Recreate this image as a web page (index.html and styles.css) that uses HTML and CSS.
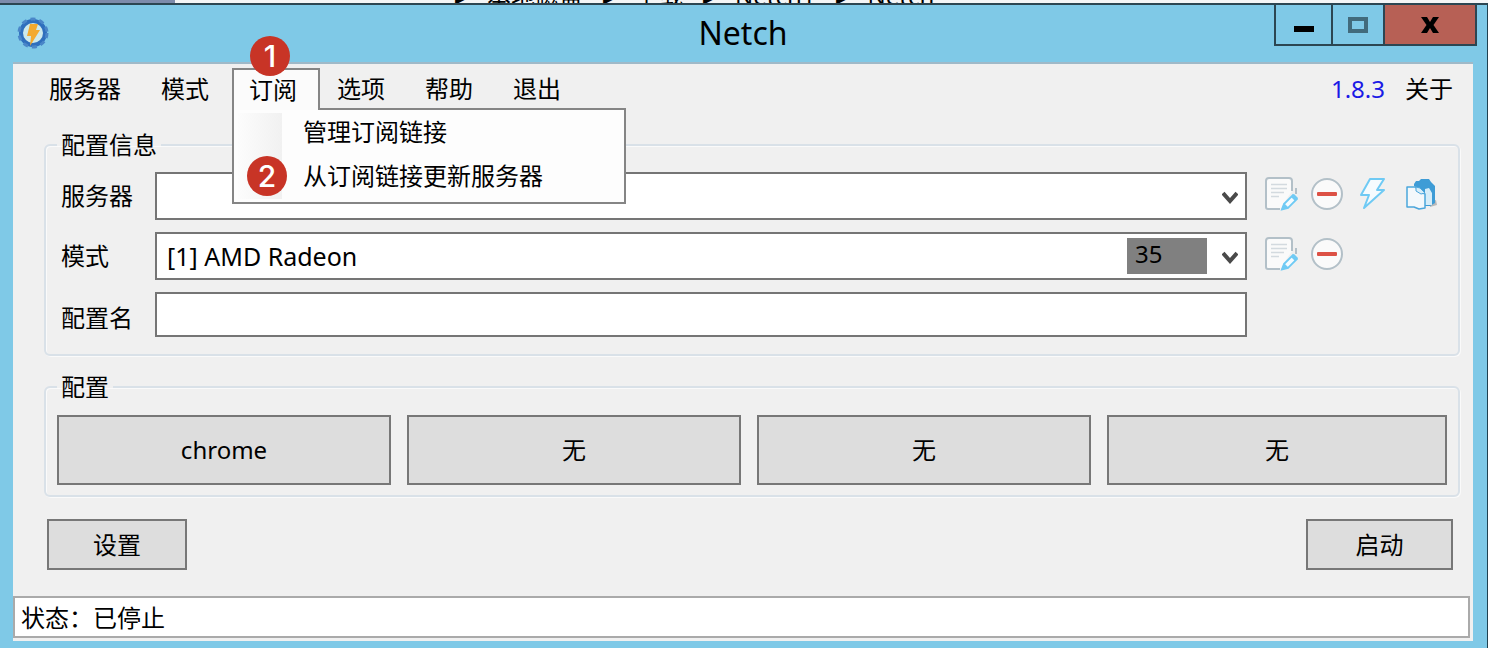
FILE: index.html
```html
<!DOCTYPE html>
<html lang="zh-CN">
<head>
<meta charset="utf-8">
<title>Netch</title>
<link rel="stylesheet" href="styles.css">
</head>
<body>
<svg class="sprite" aria-hidden="true">
  <symbol id="edit" viewBox="0 0 34 36">
    <path d="M28 15V5a3 3 0 0 0-3-3H5a3 3 0 0 0-3 3v26a2 2 0 0 0 2 2h12z" fill="#fafafa"/>
    <path d="M28 15V5a3 3 0 0 0-3-3H5a3 3 0 0 0-3 3v26a2 2 0 0 0 2 2h12M32 12v6" fill="none" stroke="#b3c0c8" stroke-width="2"/>
    <path d="M7 8.500h16M7 12.500h16M7 16.500h13M7 20.500h8" stroke="#d3dadf" stroke-width="1.500"/>
    <path d="M20 28L29 19l4 4-9 9-6 1.500z" fill="#f4fbff" stroke="#6fcaf4" stroke-width="1.800"/>
    <path d="M27 21l3-3 4 4-3 3zM17 34l3-7 5 5z" fill="#6fcaf4"/>
  </symbol>
  <symbol id="remove" viewBox="0 0 34 34">
    <circle cx="17" cy="17" r="15" fill="#fafafa" stroke="#b3c0c8" stroke-width="2"/>
    <rect x="7" y="15" width="20" height="4" rx="1" fill="#dc5145"/>
  </symbol>
</svg>
<div class="backdrop"><span class="tabs"></span><div class="crumbs"><span>▸</span><span>本地磁盘</span><span>▸</span><span>下载</span><span>▸</span><span>Netch1</span><span>▸</span><span>Netch</span></div></div>
<div class="window">
  <header class="titlebar">
    <svg class="logo" viewBox="0 0 32 32" aria-hidden="true">
      <circle cx="16" cy="16" r="12" fill="#cde9ec" stroke="#2f6fbd" stroke-width="4"/>
      <circle cx="16" cy="16" r="14" fill="none" stroke="#4a86c8" stroke-width="3" stroke-dasharray="5 4"/>
      <path d="M13 7h8l-2 6h4L13 29l1-10h-4z" fill="#f3a92e"/>
    </svg>
    <h1 class="title">Netch</h1>
    <div class="controls">
      <button class="control minimize" aria-label="最小化"><svg viewBox="0 0 20 16"><path d="M0 9h20v6H0z"/></svg></button>
      <button class="control maximize" aria-label="最大化"><svg viewBox="0 0 20 16"><path d="M2 2h16v12H2z" fill="none" stroke="#426b7c" stroke-width="4"/></svg></button>
      <button class="control close" aria-label="关闭"><svg viewBox="0 0 20 16"><path d="M1 0h6l3 5 3-5h6l-5.500 8 5.500 8h-6l-3-5-3 5H1l5.500-8z"/></svg></button>
    </div>
  </header>
  <main class="client">
    <nav class="menu">
      <button class="item">服务器</button>
      <button class="item">模式</button>
      <div class="open">
        <button class="item active" aria-expanded="true">订阅</button>
        <span class="badge first">1</span>
        <div class="dropdown">
          <button class="option">管理订阅链接</button>
          <button class="option">从订阅链接更新服务器</button>
          <span class="badge second">2</span>
        </div>
      </div>
      <button class="item">选项</button>
      <button class="item">帮助</button>
      <button class="item">退出</button>
      <a class="version" href="#">1.8.3</a>
      <button class="item about">关于</button>
    </nav>
    <fieldset class="group info">
      <legend>配置信息</legend>
      <label for="server">服务器</label>
      <div class="field"><select id="server"><option></option></select><svg class="arrow" viewBox="0 0 16 14"><path d="M1 2l7 8 7-8" /></svg></div>
      <div class="tools">
        <button aria-label="编辑服务器"><svg class="edit"><use href="#edit"/></svg></button>
        <button aria-label="删除服务器"><svg class="remove"><use href="#remove"/></svg></button>
        <button aria-label="测速"><svg class="bolt" viewBox="0 0 28 34"><path d="M11 2h14l-7 11h7L5 31l5-13H2z" fill="#f5fbfe" stroke="#6fcaf4" stroke-width="2" stroke-linejoin="round"/></svg></button>
        <button aria-label="复制"><svg class="copy" viewBox="0 0 32 32">
          <path d="M25 24l6-2 1 5-7 2z" fill="#b9b9b9"/>
          <path d="M9 6l2-3h3l2-2h8l2 3 4 4v17l-5 3h-7V13L9 8z" fill="#3e9cd6"/>
          <path d="M20 11l4-1 3 5v12h-7z" fill="#d6edf9"/>
          <path d="M2 9h9l1 3 8 4v14l-6 1-5-2H2z" fill="#f3f8fb" stroke="#4ba6dc" stroke-width="1.500" stroke-linejoin="round"/>
          <path d="M11 9l4 1 5 5-4 1-5-3z" fill="#d6edf9" stroke="#4ba6dc"/>
        </svg></button>
      </div>
      <label for="mode">模式</label>
      <div class="field"><select id="mode"><option>[1] AMD Radeon</option></select><span class="count">35</span><svg class="arrow" viewBox="0 0 16 14"><path d="M1 2l7 8 7-8" /></svg></div>
      <div class="tools">
        <button aria-label="编辑模式"><svg class="edit"><use href="#edit"/></svg></button>
        <button aria-label="删除模式"><svg class="remove"><use href="#remove"/></svg></button>
      </div>
      <label class="low" for="name">配置名</label>
      <div class="field short"><input id="name" type="text"></div>
    </fieldset>
    <fieldset class="group profiles">
      <legend>配置</legend>
      <button class="push">chrome</button>
      <button class="push">无</button>
      <button class="push">无</button>
      <button class="push">无</button>
    </fieldset>
    <div class="actions">
      <button class="push">设置</button>
      <button class="push">启动</button>
    </div>
    <footer class="status">状态：已停止</footer>
  </main>
</div>
</body>
</html>
```
FILE: styles.css
```css
* { box-sizing: border-box; }
body {
  margin: 0;
  min-height: 100vh;
  display: flex;
  flex-direction: column;
  font: 24px/32px "Noto Sans", "Noto Sans CJK SC", sans-serif;
  color: #000;
  background: #7fc9e7;
}
button, select, input { font: inherit; color: inherit; }
button { padding: 0; border: 0; background: none; }
svg { display: block; }
.sprite { position: absolute; width: 0; height: 0; }

.backdrop { height: 3px; display: flex; align-items: flex-end; overflow: hidden; background: #f4f5f6; }
.tabs { flex: none; width: 175px; height: 3px; margin-right: 280px; background: #7d8bab; }
.crumbs { display: flex; gap: 20px; margin-bottom: -9px; }

.window {
  flex: 1;
  display: flex;
  flex-direction: column;
  padding: 0 14px 7px 13px;
  border-top: 2px solid #2c4652;
  border-right: 1px solid #20414f;
}
.titlebar { height: 57px; display: grid; grid-template-columns: 202px 1fr 202px; align-items: start; }
.logo { width: 32px; height: 32px; margin: 12px 0 0 4px; }
.title { margin: 8px 0 0; text-align: center; font-size: 32px; line-height: 40px; font-weight: 400; }
.controls { justify-self: end; display: flex; height: 41px; margin-right: -4px; border: solid #2c4652; border-width: 0 2px 2px; }
.control { width: 55px; display: flex; justify-content: center; align-items: center; }
.control svg { width: 20px; height: 16px; }
.maximize { width: 52px; border-left: 2px solid #2c4652; }
.close { width: 92px; border-left: 2px solid #2c4652; background: #b76055; }

.client { flex: 1; display: flex; flex-direction: column; background: #f0f0f0; border-top: 2px solid #9fb9c8; }

.menu { display: flex; height: 46px; padding: 4px 3px 0 20px; }
.item { height: 42px; padding: 0 16px; }
.menu > .item { min-width: 88px; }
.menu > .item:first-child { margin-right: 4px; }
.menu > .open + .item { margin-left: -3px; }
.open { position: relative; margin-left: 3px; }
.active { width: 88px; background: #fbfbfb; border: 2px solid #858585; border-bottom: 0; padding: 0 0 0 15px; text-align: left; }
.dropdown {
  position: absolute;
  z-index: 1;
  top: 40px;
  left: 0;
  width: 394px;
  height: 96px;
  display: flex;
  flex-direction: column;
  background: linear-gradient(90deg, #fcfcfc, #f1f1f1) 4px 3px / 44px 86px no-repeat #fdfdfd;
  border: 2px solid #858585;
}
.dropdown::before { content: ""; position: absolute; top: -2px; left: 0; width: 84px; height: 2px; background: #fbfbfb; }
.option { height: 44px; padding-left: 69px; text-align: left; }
.badge {
  position: absolute;
  width: 40px;
  height: 40px;
  border-radius: 50%;
  background: #c83426;
  color: #fff;
  font: 500 30px/40px Inter, sans-serif;
  text-align: center;
}
.first { top: -32px; left: 18px; }
.second { top: 46px; left: 13px; }
.version { margin-left: auto; line-height: 42px; color: #1a1ae6; text-decoration: none; }
.menu > .about { min-width: 0; padding: 0 17px 0 20px; }

.group {
  margin: 0 13px 0 31px;
  min-width: 0;
  border: 2px solid #d9e1e8;
  border-radius: 6px;
  box-shadow: inset 1px 1px #fafafa, 1px 1px #fafafa;
}
.group legend { padding: 0 4px; }
.info {
  margin-top: 19px;
  padding: 11px 11px 17px 15px;
  display: grid;
  grid-template-columns: 85px 1fr 191px;
  gap: 12px 9px;
  align-items: center;
}
.info legend { margin-left: -4px; }
.low { padding-top: 6px; }
.field { position: relative; height: 48px; }
.short { height: 45px; }
.field select, .field input {
  width: 100%;
  height: 100%;
  padding: 0 10px;
  appearance: none;
  background: #fff;
  border: 2px solid #757575;
  border-radius: 0;
}
.field select { font-size: 25px; }
.arrow { position: absolute; right: 9px; top: 19px; width: 16px; height: 14px; fill: none; stroke: #4a4a4a; stroke-width: 4; }
.count { position: absolute; top: 6px; right: 40px; width: 80px; height: 36px; padding-left: 8px; background: #808080; }
.tools { display: flex; align-items: center; height: 44px; align-self: start; padding-left: 8px; }
.edit { width: 34px; height: 36px; }
.remove { width: 34px; height: 34px; margin-left: 12px; }
.bolt { width: 28px; height: 34px; margin-left: 15px; }
.copy { width: 32px; height: 32px; margin-left: 18px; }

.profiles { margin-top: 15px; padding: 12px 11px 10px; display: grid; grid-template-columns: 334fr 334fr 334fr 340fr; gap: 16px; }
.push { height: 70px; background: #ddd; border: 2px solid #777; }
.actions { display: flex; justify-content: space-between; padding: 22px 20px 0 34px; }
.actions .push { width: 140px; height: 51px; }
.actions .push:last-child { width: 147px; }
.status { margin: auto 3px 3px 0; height: 42px; padding: 4px 6px; background: #fff; border: 2px solid #aaa; font-family: "Noto Sans", "Noto Sans CJK SC", sans-serif; }
```
